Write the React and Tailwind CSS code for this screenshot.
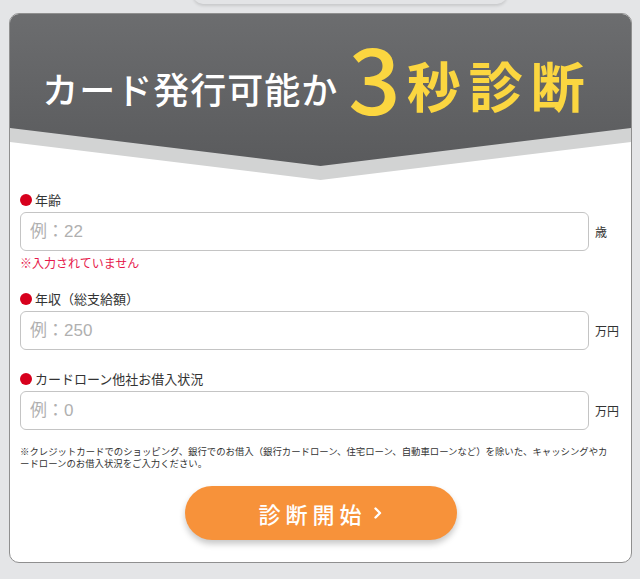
import React from 'react';

const FONT = { fontFamily: '"Noto Sans CJK JP", "Noto Sans", sans-serif' };

const fields = [
  { label: '年齢', placeholder: '例：22', unit: '歳', error: '※入力されていません' },
  { label: '年収（総支給額）', placeholder: '例：250', unit: '万円' },
  { label: 'カードローン他社お借入状況', placeholder: '例：0', unit: '万円' },
];

function Field({ label, placeholder, unit, error, first }) {
  return (
    <div className={first ? 'mt-[13px]' : 'mt-[22px]'}>
      <div className="flex items-center h-[14px]">
        <span className="w-[12px] h-[12px] rounded-full bg-[#d7001d] mr-[3px]" />
        <span className="text-[13px] leading-[14px] text-[#333]">{label}</span>
      </div>
      <div className="flex items-center mt-[5px]">
        <input
          type="text"
          placeholder={placeholder}
          className="flex-1 h-[39px] rounded-[6px] border border-[#c4c4c4] bg-white px-[9px] text-[17px] text-[#333] placeholder:text-[#b0b0b0] focus:outline-none"
          style={{ fontFamily: '"Liberation Sans", "Noto Sans CJK JP", sans-serif' }}
        />
        <span className="w-[32px] pl-[6px] text-[12px] text-[#333]">{unit}</span>
      </div>
      {error && <p className="mt-[5px] text-[12px] leading-[14px] text-[#e6174b]">{error}</p>}
    </div>
  );
}

export default function App() {
  return (
    <div className="min-h-[579px] bg-[#e4e5e7] overflow-hidden" style={FONT}>
      {/* bottom edge of the element above */}
      <div className="ml-[193px] w-[314px] h-[12px] -mt-[8px] rounded-b-[10px] bg-[#e3e4e6] shadow-[0_2px_3px_rgba(0,0,0,0.12)]" />

      <div className="ml-[9px] mt-[9px] w-[623px] rounded-[10px] border border-[#8f8f8f] bg-white overflow-hidden">
        {/* header with chevron */}
        <div className="relative h-[166px]">
          <div className="absolute inset-0 bg-[#d2d3d3] [clip-path:polygon(0_0,100%_0,100%_128px,50%_166px,0_128px)]" />
          <div className="absolute inset-0 bg-gradient-to-b from-[#6c6d6f] to-[#58595b] [clip-path:polygon(0_0,100%_0,100%_114px,50%_152px,0_114px)]" />
          <div className="relative flex items-baseline justify-center pt-[2px] pr-[6px]">
            <span className="relative -top-[4px] text-[36px] font-medium tracking-[1px] text-white">カード発行可能か</span>
            <span className="relative top-[7px] ml-[10px] text-[92px] leading-[104px] font-medium text-[#fbd640]">3</span>
            <span className="ml-[6px] text-[54px] font-bold tracking-[8px] text-[#fbd640]">秒診断</span>
          </div>
        </div>

        <div className="px-[10px] pb-[22px]">
          {fields.map((f, i) => (
            <Field key={f.label} {...f} first={i === 0} />
          ))}

          <div className="mt-[15px] text-[9.4px] leading-[12px] text-[#333] whitespace-nowrap">
            <p>※クレジットカードでのショッピング、銀行でのお借入（銀行カードローン、住宅ローン、自動車ローンなど）を除いた、キャッシングやカ</p>
            <p>ードローンのお借入状況をご入力ください。</p>
          </div>

          <div className="flex justify-center mt-[17px]">
            <button className="w-[272px] h-[54px] rounded-full bg-[#f7923a] text-white text-[22px] font-medium tracking-[5px] flex items-center justify-center shadow-[0_4px_6px_rgba(0,0,0,0.22)]">
              診断開始
              <svg className="ml-[6px]" width="10" height="14" viewBox="0 0 10 14" fill="none">
                <path d="M2.5 2.5 L7 7 L2.5 11.5" stroke="white" strokeWidth="2.4" strokeLinecap="round" strokeLinejoin="round" />
              </svg>
            </button>
          </div>
        </div>
      </div>
    </div>
  );
}
